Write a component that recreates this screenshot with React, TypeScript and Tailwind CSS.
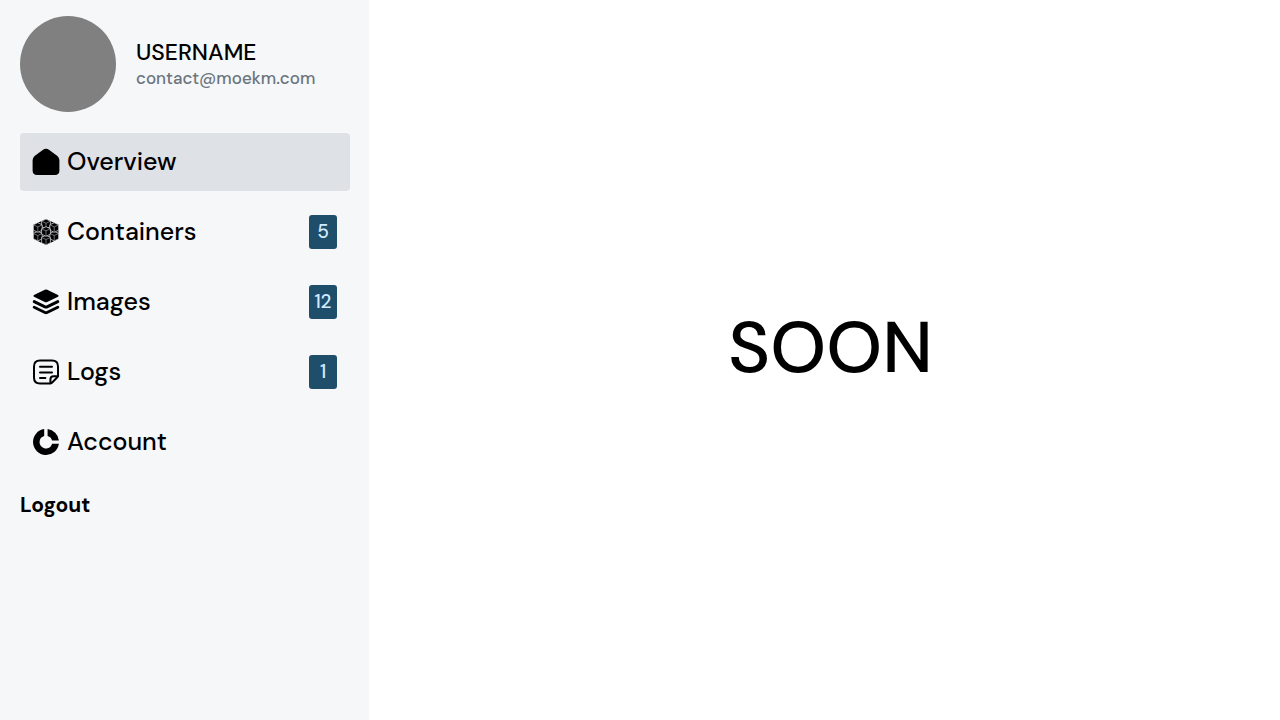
import type { ReactNode } from "react";

function HomeIcon() {
  return (
    <svg viewBox="0 0 28 28" className="size-7 shrink-0" aria-hidden="true">
      <path d="M10.7 1.9Q14 -.5 17.3 1.9L25.4 8.1Q27.4 9.7 27.4 12.4V22.6Q27.4 27 23 27H5Q.6 27 .6 22.6V12.4Q.6 9.7 2.6 8.1Z" />
    </svg>
  );
}

const cubes = [
  [4.8, 17],
  [21.2, 17],
  [13, 21],
  [13, 4.8],
  [4.8, 8.4],
  [21.2, 8.4],
  [13, 12.4],
];

function CubesIcon() {
  return (
    <svg viewBox="-1 -1 28 28" className="size-7 shrink-0" aria-hidden="true">
      <path d="M13 0L25.4 5.8V20L13 26L.6 20V5.8Z" />
      {cubes.map(([x, y]) => (
        <g key={`${x}-${y}`} transform={`translate(${x} ${y})`}>
          <path d="M0 -4.7L4.4 -2.6V2.8L0 4.9L-4.4 2.8V-2.6Z" stroke="#e8eaec" strokeWidth=".7" />
          <path d="M-4.3 -2.5L0 -.5L4.3 -2.5M0 -.5V4.7" fill="none" stroke="#b4b6b8" strokeWidth=".6" />
        </g>
      ))}
    </svg>
  );
}

function LayersIcon() {
  return (
    <svg viewBox="0 0 28 28" className="size-7 shrink-0" aria-hidden="true">
      <path d="M12.8 1.8Q14 1.2 15.2 1.8L26 7Q27.4 7.9 26 8.8L15.2 14Q14 14.6 12.8 14L2 8.8Q.6 7.9 2 7Z" />
      <path
        d="M2.2 13.6L13 18.9Q14 19.4 15 18.9L25.8 13.6M2.2 19.2L13 24.5Q14 25 15 24.5L25.8 19.2"
        fill="none"
        stroke="currentColor"
        strokeWidth="2.9"
        strokeLinecap="round"
      />
    </svg>
  );
}

function NoteIcon() {
  return (
    <svg
      viewBox="0 0 28 28"
      className="size-7 shrink-0"
      fill="none"
      stroke="currentColor"
      strokeWidth="2"
      strokeLinecap="round"
      strokeLinejoin="round"
      aria-hidden="true"
    >
      <path d="M18.4 25.6H8Q2 25.6 2 19.6V8.4Q2 2.4 8 2.4H20Q26 2.4 26 8.4V18.2Q25.6 19 24.8 19.8L20.2 24.5Q19.4 25.3 18.4 25.6V21.5Q18.4 18.2 21.6 18.2H26" />
      <path d="M8 8.7H20M8 14.4H20M8 20.1H13.4" />
    </svg>
  );
}

function DonutIcon() {
  return (
    <svg viewBox="0 0 28 28" className="size-7 shrink-0" aria-hidden="true">
      <path d="M12.2 1.1V7.9A6.4 6.4 0 1 0 20.1 15.8H26.9A13 13 0 1 1 12.2 1.1Z" />
      <path d="M15.6 1.1A13 13 0 0 1 26.9 12.4H20.1A6.4 6.4 0 0 0 15.6 7.9Z" />
    </svg>
  );
}

type Item = { label: string; icon: ReactNode; count?: number; active?: boolean };

const items: Item[] = [
  { label: "Overview", icon: <HomeIcon />, active: true },
  { label: "Containers", icon: <CubesIcon />, count: 5 },
  { label: "Images", icon: <LayersIcon />, count: 12 },
  { label: "Logs", icon: <NoteIcon />, count: 1 },
  { label: "Account", icon: <DonutIcon /> },
];

export default function App() {
  return (
    <div className="flex min-h-screen bg-white font-['DM_Sans',Inter,sans-serif] text-black">
      <aside className="w-[369px] shrink-0 bg-[#f5f7f9] py-4 pr-[19px] pl-5">
        <header className="flex items-center gap-5">
          <div className="size-24 shrink-0 rounded-full bg-[#808080]" />
          <div>
            <h1 className="text-[23px] leading-7 font-medium">USERNAME</h1>
            <p className="text-[17px] leading-6 font-medium text-[#6c757d]">contact@moekm.com</p>
          </div>
        </header>
        <nav className="mt-[21px] flex flex-col gap-3">
          {items.map((item) => (
            <a
              key={item.label}
              href={`#${item.label.toLowerCase()}`}
              aria-current={item.active ? "page" : undefined}
              className={
                item.active
                  ? "flex h-[58px] items-center gap-[7px] rounded bg-[#dee1e6] pr-[13px] pl-3"
                  : "flex h-[58px] items-center gap-[7px] rounded pr-[13px] pl-3"
              }
            >
              {item.icon}
              <span className="grow text-[25px] leading-[34px] font-medium">{item.label}</span>
              {item.count !== undefined && (
                <span className="flex h-[34px] w-7 items-center justify-center rounded-[3px] bg-[#1f4e6b] text-[19px] font-medium text-[#d0ebff]">
                  {item.count}
                </span>
              )}
            </a>
          ))}
        </nav>
        <button type="button" className="mt-[18px] text-[21px] leading-8 font-bold">
          Logout
        </button>
      </aside>
      <main className="flex grow items-center justify-center pb-6 pl-3">
        <p className="text-7xl font-medium">SOON</p>
      </main>
    </div>
  );
}
